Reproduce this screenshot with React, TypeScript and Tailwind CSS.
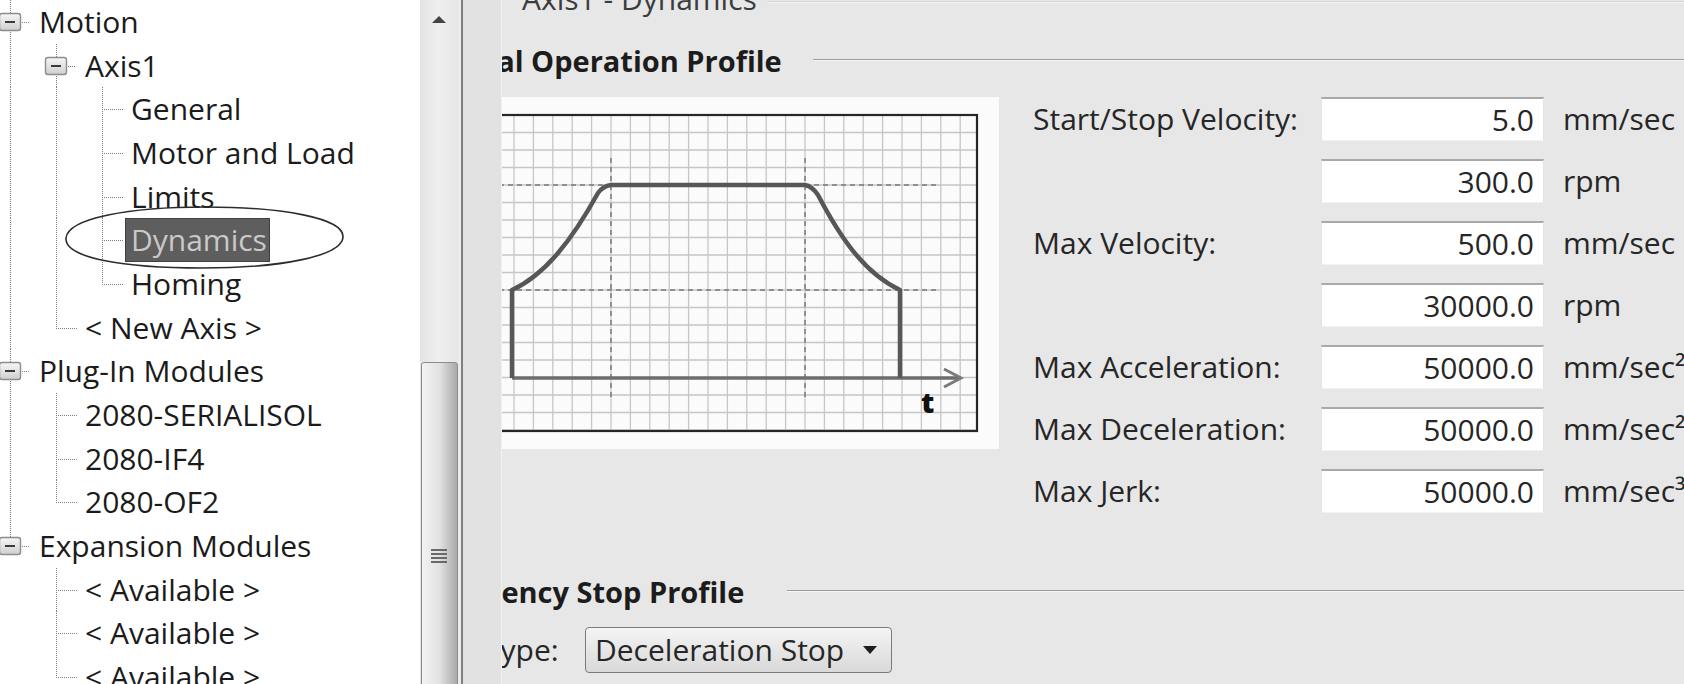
import React from "react";

type TreeRow = {
  label: string;
  level: number;
  expander?: boolean;
  selected?: boolean;
  // one entry per column up to level
  guides: ("full" | "top" | "none")[];
};

const treeRows: TreeRow[] = [
  { label: "Motion", level: 0, expander: true, guides: ["full"] },
  { label: "Axis1", level: 1, expander: true, guides: ["full", "full"] },
  { label: "General", level: 2, guides: ["full", "full", "full"] },
  { label: "Motor and Load", level: 2, guides: ["full", "full", "full"] },
  { label: "Limits", level: 2, guides: ["full", "full", "full"] },
  { label: "Dynamics", level: 2, selected: true, guides: ["full", "full", "full"] },
  { label: "Homing", level: 2, guides: ["full", "full", "top"] },
  { label: "< New Axis >", level: 1, guides: ["full", "top"] },
  { label: "Plug-In Modules", level: 0, expander: true, guides: ["full"] },
  { label: "2080-SERIALISOL", level: 1, guides: ["full", "full"] },
  { label: "2080-IF4", level: 1, guides: ["full", "full"] },
  { label: "2080-OF2", level: 1, guides: ["full", "top"] },
  { label: "Expansion Modules", level: 0, expander: true, guides: ["top"] },
  { label: "< Available >", level: 1, guides: ["none", "full"] },
  { label: "< Available >", level: 1, guides: ["none", "full"] },
  { label: "< Available >", level: 1, guides: ["none", "top"] },
];

const formRows = [
  { label: "Start/Stop Velocity:", value: "5.0", unit: "mm/sec" },
  { label: "", value: "300.0", unit: "rpm" },
  { label: "Max Velocity:", value: "500.0", unit: "mm/sec" },
  { label: "", value: "30000.0", unit: "rpm" },
  { label: "Max Acceleration:", value: "50000.0", unit: "mm/sec²" },
  { label: "Max Deceleration:", value: "50000.0", unit: "mm/sec²" },
  { label: "Max Jerk:", value: "50000.0", unit: "mm/sec³" },
];

function GuideCell({ kind, own, expander }: { kind: "full" | "top" | "none"; own: boolean; expander?: boolean }) {
  const h = 44;
  const c = 23;
  const mid = 22;
  return (
    <svg width="46" height={h} className="shrink-0" aria-hidden="true">
      {kind !== "none" && (
        <line
          x1={c + 0.5}
          y1={0}
          x2={c + 0.5}
          y2={kind === "full" ? h : mid}
          stroke="#7e7e7e"
          strokeWidth="1"
          strokeDasharray="1 1"
        />
      )}
      {own && (
        <line x1={c} y1={mid + 0.5} x2={c + 21} y2={mid + 0.5} stroke="#7e7e7e" strokeWidth="1" strokeDasharray="1 1" />
      )}
      {expander && (
        <g>
          <defs>
            <linearGradient id="exp" x1="0" y1="0" x2="0" y2="1">
              <stop offset="0" stopColor="#f6f6f6" />
              <stop offset="1" stopColor="#cfcfcf" />
            </linearGradient>
          </defs>
          <line x1={c + 10} y1={mid + 0.5} x2={c + 20} y2={mid + 0.5} stroke="#7e7e7e" strokeWidth="1" strokeDasharray="1 1" />
          <rect x={c - 10.5} y={mid - 8.5} width="21" height="17" rx="2.5" fill="url(#exp)" stroke="#8d8d8d" strokeWidth="1.4" />
          <line x1={c - 5} y1={mid} x2={c + 5} y2={mid} stroke="#3a3a3a" strokeWidth="2" />
        </g>
      )}
    </svg>
  );
}

function Tree() {
  return (
    <aside className="relative w-[420px] shrink-0 overflow-hidden bg-white font-['Open_Sans',sans-serif] text-[30px] text-[#1b1b1b]">
      <div className="-ml-[13px]">
        {treeRows.map((row, i) => (
          <div key={i} className="flex h-[43.7px] items-center">
            {row.guides.map((g, col) => (
              <GuideCell
                key={col}
                kind={g}
                own={col === row.level && !row.expander}
                expander={col === row.level && row.expander}
              />
            ))}
            <span
              className={
                row.selected
                  ? "flex h-[44px] items-center whitespace-nowrap border border-[#3f3f3f] bg-[#5e5e5e] pl-[5px] pr-[2px] leading-none text-[#c9c9c9]"
                  : "whitespace-nowrap pl-[6px] leading-none"
              }
            >
              {row.label}
            </span>
          </div>
        ))}
      </div>
      <svg
        className="pointer-events-none absolute left-[60px] top-[204px]"
        width="290"
        height="70"
        aria-hidden="true"
      >
        <path
          d="M6 34 C 8 14, 70 3, 145 3 C 222 3, 284 14, 283 33 C 282 52, 222 64, 142 64 C 64 64, 4 54, 6 34 Z"
          fill="none"
          stroke="#2c2c2c"
          strokeWidth="1.6"
        />
      </svg>
    </aside>
  );
}

function Scrollbar() {
  return (
    <div className="flex w-[38px] shrink-0 flex-col bg-gradient-to-r from-[#e4e4e4] via-[#efefef] to-[#e6e6e6]">
      <div className="flex h-[40px] items-center justify-center">
        <svg width="14" height="8" viewBox="0 0 14 8" aria-hidden="true">
          <path d="M0 7 L7 0 L14 7 Z" fill="#454545" />
        </svg>
      </div>
      <div className="mt-[322px] flex flex-1 justify-center">
        <div className="flex h-[340px] w-[37px] flex-col items-center rounded-[3px] border border-[#8c8c8c] bg-gradient-to-r from-[#f3f3f3] via-[#e2e2e2] to-[#a9a9a9] pt-[186px]">
          <div className="flex w-[16px] flex-col gap-[2px]">
            <div className="h-[2px] bg-[#6a6a6a]" />
            <div className="h-[2px] bg-[#6a6a6a]" />
            <div className="h-[2px] bg-[#6a6a6a]" />
            <div className="h-[2px] bg-[#6a6a6a]" />
          </div>
        </div>
      </div>
    </div>
  );
}

function ProfileChart() {
  const vLines: number[] = [];
  for (let x = 127 - 6 * 19.4; x < 493; x += 19.4) vLines.push(x);
  const hLines: number[] = [];
  for (let y = 88 - 4 * 17.5; y < 334; y += 17.5) hLines.push(y);
  return (
    <div className="h-[352px] w-[515px] shrink-0 bg-[#fbfbfb]">
      <svg width="515" height="352" viewBox="0 0 515 352" aria-hidden="true">
        {vLines.map((x) => (
          <line key={`v${x}`} x1={x} y1={18} x2={x} y2={334} stroke="#c6c6c6" strokeWidth="1.3" />
        ))}
        {hLines.map((y) => (
          <line key={`h${y}`} x1={6} y1={y} x2={493} y2={y} stroke="#c6c6c6" strokeWidth="1.3" />
        ))}
        <g stroke="#7a7a7a" strokeWidth="1.5" strokeDasharray="5 4" fill="none">
          <line x1={6} y1={88} x2={452} y2={88} />
          <line x1={6} y1={193} x2={452} y2={193} />
          <line x1={127} y1={61} x2={127} y2={300} />
          <line x1={321} y1={61} x2={321} y2={300} />
        </g>
        <rect x={6} y={18} width={487} height={316} fill="none" stroke="#262626" strokeWidth="2.2" />
        <line x1={28} y1={281} x2={474} y2={281} stroke="#6d6d6d" strokeWidth="3.5" />
        <path d="M460 272 L477 281 L460 290" fill="none" stroke="#7a7a7a" strokeWidth="3" />
        <path
          d="M28 281 V193 C61 178 88 143 114 96 Q119 89 127 88 H321 Q328 89 334 98 C356 140 380 176 416 193 V281"
          fill="none"
          stroke="#575757"
          strokeWidth="4.5"
          strokeLinejoin="round"
        />
        <text x={437} y={316} fontFamily="Open Sans, sans-serif" fontWeight="800" fontSize="29" fill="#111">
          t
        </text>
      </svg>
    </div>
  );
}

function SectionHeader({ title, width, shift }: { title: string; width: string; shift: string }) {
  return (
    <div className="flex h-[36px] items-center">
      <div className={`${width} shrink-0 whitespace-nowrap text-[29px] font-bold leading-[36px] text-[#1c1c1c]`}>
        <span className={shift}>{title}</span>
      </div>
      <div className="-mt-[3px] flex-1 border-t border-b border-t-[#9b9b9b] border-b-[#f4f4f4]" />
    </div>
  );
}

export default function App() {
  return (
    <div className="flex h-[684px] w-[1684px] overflow-hidden bg-[#e7e7e7]">
      <Tree />
      <div className="flex flex-col">
        <Scrollbar />
      </div>
      <div className="w-[3px] shrink-0 bg-[#ececec]" />
      <div className="w-[2px] shrink-0 bg-[#7f7f7f]" />
      <div className="w-[39px] shrink-0 border-r border-[#f2f2f2] bg-[#e2e2e2]" />
      <main className="relative min-w-0 flex-1 overflow-hidden font-['Open_Sans',sans-serif] text-[#262626]">
        <div className="-ml-[88px] w-[1300px]">
          <div className="-mt-[16px] flex h-[30px] items-start">
            <span className="ml-[108px] whitespace-nowrap text-[30px] leading-[30px] text-[#3c3c3c]">
              Axis1 - Dynamics
            </span>
            <div className="ml-[10px] mt-[17px] flex-1 border-t border-b border-t-[#d6d6d6] border-b-[#f3f3f3]" />
          </div>

          <div className="mt-[29px]">
            <SectionHeader title="Normal Operation Profile" width="w-[399px]" shift="ml-0" />
          </div>

          <div className="mt-[18px] flex items-start">
            <div className="ml-[70px]">
              <ProfileChart />
            </div>
            <div className="ml-[34px] flex flex-col gap-[18px]">
              {formRows.map((r, i) => (
                <div key={i} className="flex h-[44px] items-center">
                  <div className="w-[288px] whitespace-nowrap text-[30px] leading-none">{r.label}</div>
                  <div className="flex h-[44px] w-[223px] items-center justify-end border-x border-t-2 border-b border-x-[#e4e4e4] border-t-[#a9a9a9] border-b-[#f2f2f2] bg-white pr-[9px] text-[30px] leading-none">
                    {r.value}
                  </div>
                  <div className="ml-[19px] whitespace-nowrap text-[30px] leading-none">{r.unit}</div>
                </div>
              ))}
            </div>
          </div>

          <div className="mt-[61px]">
            <SectionHeader title="Emergency Stop Profile" width="w-[373px]" shift="-ml-[4px]" />
          </div>

          <div className="mt-[17px] flex h-[46px] items-center">
            <div className="ml-[70px] w-[101px] text-[30px] leading-none">Type:</div>
            <div className="flex h-[46px] w-[307px] items-center justify-between rounded-[4px] border-[1.5px] border-[#7b7b7b] bg-gradient-to-b from-[#f4f4f4] to-[#d9d9d9] pl-[9px] pr-[14px]">
              <span className="whitespace-nowrap text-[30px] leading-none text-[#262626]">Deceleration Stop</span>
              <svg width="14" height="8" viewBox="0 0 14 8" aria-hidden="true">
                <path d="M0 0 H14 L7 8 Z" fill="#1e1e1e" />
              </svg>
            </div>
          </div>
        </div>
      </main>
    </div>
  );
}
